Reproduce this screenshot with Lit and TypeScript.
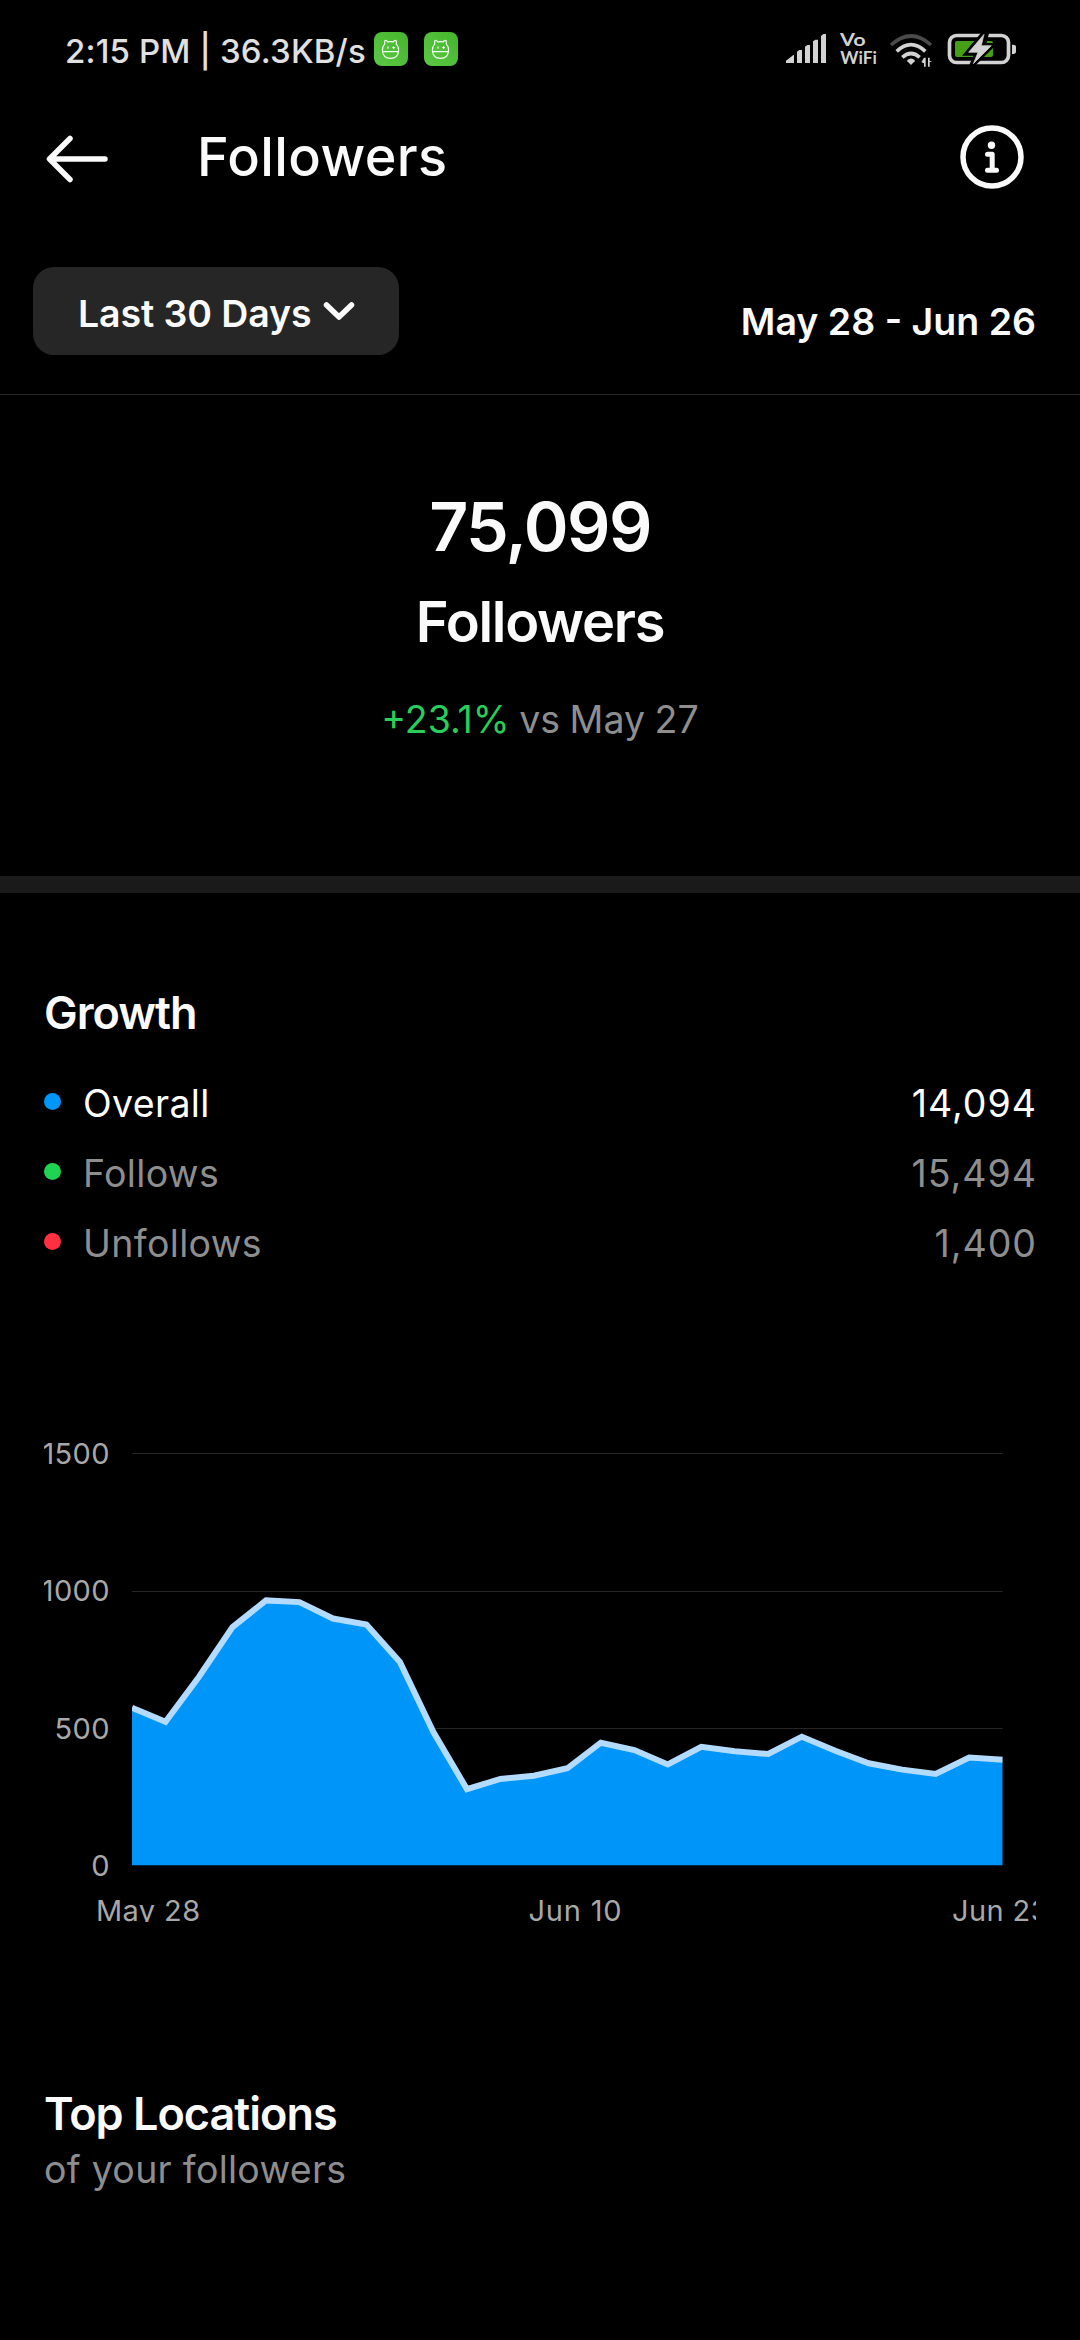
import { LitElement, html, svg, css } from "lit";
import { customElement, property } from "lit/decorators.js";

const DAILY = [
  574, 523, 687, 868, 965, 959, 899, 877, 741, 486, 278, 315, 327, 354, 447,
  420, 368, 432, 416, 406, 469, 418, 372, 349, 333, 393, 385,
];

const STATS = [
  { name: "Overall", value: "14,094", tone: "blue", active: true },
  { name: "Follows", value: "15,494", tone: "green", active: false },
  { name: "Unfollows", value: "1,400", tone: "red", active: false },
];

const appBadge = html`<svg class="badge" width="34" height="34" viewBox="0 0 34 34">
  <defs>
    <linearGradient id="g" x1="0" y1="1" x2="1" y2="0">
      <stop offset="0" stop-color="#5cc846" />
      <stop offset="1" stop-color="#45b52c" />
    </linearGradient>
  </defs>
  <rect width="34" height="34" rx="8" fill="url(#g)" />
  <g fill="none" stroke="#f2fbef" stroke-width="1.2" stroke-linejoin="round" stroke-linecap="round">
    <path d="M10.6 12.2 L10.8 8.8 Q12.4 7.6 13.6 9.9 Q16.5 9.2 19.4 9.9 Q20.6 7.6 22.2 8.8 L22.4 12.2 Q24.6 14.6 24.6 18.2 Q24.2 26.3 16.5 26.3 Q8.8 26.3 8.4 18.2 Q8.4 14.6 10.6 12.2 Z" />
    <path d="M8.6 19.6 H24.4 M14 14.8 V16.2 M19.6 14.6 V16.6 M18.7 15.6 H20.5" />
  </g>
</svg>`;

@customElement("status-bar")
class StatusBar extends LitElement {
  static styles = css`
    :host {
      display: flex;
      align-items: flex-start;
      height: 100px;
      padding: 0 55px 0 65px;
      box-sizing: border-box;
    }
    .clock {
      flex: none;
      width: 309px;
      font-size: 33px;
      font-weight: 500;
      letter-spacing: 0.15px;
      line-height: 102px;
      white-space: nowrap;
      color: #e0e0e0;
    }
    .badge {
      display: block;
      flex: none;
      margin: 32px 16px 0 0;
    }
    .system {
      display: block;
      flex: none;
      margin: 25px 0 0 auto;
    }
    .vowifi {
      font-family: Lato, "Liberation Sans", sans-serif;
      font-weight: 700;
    }
  `;
  render() {
    return html`
      <div class="clock">2:15 PM | 36.3KB/s</div>
      ${appBadge}${appBadge}
      <svg class="system" width="245" height="50" viewBox="0 0 735 150">
        <g fill="#d2d2d2">
          <path d="M18 107 L40 90 H42 V114 H18 Z" />
          <path d="M51 80 L58 75 H66 V114 H51 Z" />
          <path d="M75 65 L82 60 H90 V114 H75 Z" />
          <path d="M99 49 L106 44 H114 V114 H99 Z" />
          <path d="M123 33 L130 27 H138 V114 H123 Z" />
          <text class="vowifi" x="180" y="63" font-size="50" textLength="77" lengthAdjust="spacingAndGlyphs">Vo</text>
          <text class="vowifi" x="181" y="116" font-size="50" textLength="110" lengthAdjust="spacingAndGlyphs">WiFi</text>
        </g>
        <g fill="none" stroke-width="11">
          <path d="M333 60 Q393 6 453 60" stroke="#4a4a4a" />
          <g stroke="#d2d2d2">
            <path d="M350 79 Q393 39 436 79" />
            <path d="M367 97 Q393 74 419 97" />
          </g>
        </g>
        <path d="M382 105 Q393 96 404 105 V109 L393 120 L382 109 Z" fill="#d2d2d2" />
        <g fill="#d2d2d2">
          <path d="M432 98 H437 V125 H432 V115 L424 112 Z" />
          <path d="M444 98 H449 V107 L457 111 H449 V125 H444 Z" />
        </g>
        <rect x="508.500" y="31.500" width="177" height="81" rx="21" fill="none" stroke="#d2d2d2" stroke-width="11" />
        <path d="M696 59 Q708 58 708 66 V80 Q708 87 696 87 Z" fill="#d2d2d2" />
        <rect x="525" y="48" width="114" height="48" rx="6" fill="#46a016" />
        <path d="M606 20 L546 92 L580 92 L566 124 L584 124 L654 54 L620 54 L628 20 Z" fill="#000" />
        <path d="M612 28 L566 82 L594 82 L580 116 L634 62 L604 62 Z" fill="#d2d2d2" stroke="#d2d2d2" stroke-width="2" stroke-linejoin="round" />
      </svg>
    `;
  }
}

@customElement("growth-chart")
class GrowthChart extends LitElement {
  @property({ attribute: false }) data: number[] = [];

  static styles = css`
    :host {
      display: block;
    }
    .plot {
      display: block;
      overflow: hidden;
    }
    .tick {
      fill: #a8a8a8;
      font-family: Inter, Roboto, sans-serif;
      font-size: 29px;
      letter-spacing: 0.4px;
    }
  `;
  render() {
    const left = 88;
    const right = 958.7;
    const base = 435.5;
    const unit = 0.2747;
    const step = (right - left) / (this.data.length - 1);
    const pts = this.data.map((v, i) => `${(left + i * step).toFixed(1)},${(base - v * unit).toFixed(1)}`);
    return html`
      <svg class="plot" width="992" height="492" viewBox="0 0 992 492">
        <defs>
          <clipPath id="area"><rect x=${left} y="0" width=${right - left} height=${base} /></clipPath>
        </defs>
        ${[1500, 1000, 500, 0].map((v) => {
          const y = base - v * unit;
          return svg`
            ${v ? svg`<rect x=${left} y=${Math.round(y)} width=${right - left} height="1" fill="#262626" />` : null}
            <text class="tick" x="66" y=${y + 10.5} text-anchor="end">${v}</text>`;
        })}
        <g clip-path="url(#area)">
          <polygon points="${left},${base} ${pts.join(" ")} ${right},${base}" fill="#0095f8" />
          <polyline points=${pts.join(" ")} fill="none" stroke="#b2dbff" stroke-width="6" />
        </g>
        <text class="tick" x="52" y="491">May 28</text>
        <text class="tick" x="484.500" y="491" textLength="93.500">Jun 10</text>
        <text class="tick" x="908" y="491">Jun 23</text>
      </svg>
    `;
  }
}

@customElement("app-root")
class AppRoot extends LitElement {
  static styles = css`
    :host {
      display: flex;
      flex-direction: column;
      width: 1080px;
      height: 2340px;
      overflow: hidden;
      background: #000;
      color: #fafafa;
      font-family: Inter, Roboto, "Liberation Sans", sans-serif;
      font-size: 37.5px;
    }
    .header {
      display: flex;
      align-items: center;
      height: 114px;
      padding: 0 54px 0 44px;
    }
    .title {
      flex: 1;
      margin-left: 87px;
      font-size: 54px;
      font-weight: 500;
      letter-spacing: 0.4px;
      line-height: 114px;
    }
    .filters {
      display: flex;
      align-items: flex-start;
      justify-content: space-between;
      height: 181px;
      padding: 53px 44px 0 33px;
      box-sizing: border-box;
      border-bottom: 1px solid #262626;
    }
    .range {
      display: flex;
      align-items: center;
      width: 366px;
      height: 88px;
      padding: 3px 44px 0 45px;
      box-sizing: border-box;
      border-radius: 21px;
      background: #262626;
      font-weight: 600;
      white-space: nowrap;
    }
    .range-label {
      flex: 1;
      padding-top: 2px;
      letter-spacing: -0.1px;
    }
    .dates {
      line-height: 109px;
      font-weight: 600;
    }
    .summary {
      height: 481px;
      padding-top: 89px;
      box-sizing: border-box;
      text-align: center;
    }
    .count {
      font-size: 68px;
      line-height: 84px;
      font-weight: 600;
      letter-spacing: -1.6px;
    }
    .label {
      margin-top: 24px;
      font-size: 56px;
      line-height: 60px;
      font-weight: 600;
      letter-spacing: -1.3px;
    }
    .delta {
      margin-top: 43px;
      line-height: 50px;
      word-spacing: -1px;
      color: #8e8e8e;
    }
    .up {
      color: #28cd5a;
    }
    .band {
      height: 17px;
      background: #1a1a1a;
    }
    .growth {
      padding: 92px 44px 0;
    }
    .heading {
      font-size: 45px;
      line-height: 56px;
      font-weight: 600;
      letter-spacing: -1px;
    }
    .stats {
      margin-top: 27px;
    }
    .stat {
      display: flex;
      align-items: center;
      height: 70px;
      letter-spacing: 0.35px;
      color: #8e8e8e;
    }
    .stat.active {
      color: #fff;
    }
    .dot {
      width: 17px;
      height: 17px;
      margin: 0 22px 3px 0;
      border-radius: 50%;
    }
    .dot.blue {
      background: #0095f8;
    }
    .dot.green {
      background: #1fd450;
    }
    .dot.red {
      background: #ff3040;
    }
    .value {
      margin: 0 -1px 0 auto;
      letter-spacing: 1px;
    }
    .chart {
      margin-top: 152px;
    }
    .locations {
      padding: 164px 44px 0;
    }
    .sub {
      margin-top: 3px;
      line-height: 50px;
      letter-spacing: 0.28px;
      color: #8e8e8e;
    }
  `;
  render() {
    return html`
      <status-bar></status-bar>
      <div class="header">
        <svg width="66" height="54" viewBox="0 0 66 54" fill="none" stroke="#fafafa" stroke-width="5.500" stroke-linecap="round" stroke-linejoin="round">
          <path d="M61 29 H6 M26 8.500 L5.500 29 L26 49.500" />
        </svg>
        <div class="title">Followers</div>
        <svg width="68" height="68" viewBox="0 0 68 68">
          <circle cx="34" cy="34" r="29" fill="none" stroke="#fafafa" stroke-width="5.500" />
          <circle cx="33.500" cy="22.300" r="3.700" fill="#fafafa" />
          <path d="M29.500 31.300 H34.200 V47.300 M29.500 47.300 H38.500" fill="none" stroke="#fafafa" stroke-width="5" stroke-linecap="round" stroke-linejoin="round" />
        </svg>
      </div>
      <div class="filters">
        <div class="range">
          <span class="range-label">Last 30 Days</span>
          <svg width="33" height="26" viewBox="0 0 33 26" fill="none" stroke="#fafafa" stroke-width="5.500" stroke-linecap="round" stroke-linejoin="round">
            <path d="M4.500 5 L17 17 L29.500 5" />
          </svg>
        </div>
        <div class="dates">May 28 - Jun 26</div>
      </div>
      <div class="summary">
        <div class="count">75,099</div>
        <div class="label">Followers</div>
        <div class="delta"><span class="up">+23.1%</span> vs May 27</div>
      </div>
      <div class="band"></div>
      <div class="growth">
        <div class="heading">Growth</div>
        <div class="stats">
          ${STATS.map(
            (s) => html`<div class="stat ${s.active ? "active" : ""}">
              <span class="dot ${s.tone}"></span>
              <span>${s.name}</span>
              <span class="value">${s.value}</span>
            </div>`,
          )}
        </div>
        <growth-chart class="chart" .data=${DAILY}></growth-chart>
      </div>
      <div class="locations">
        <div class="heading">Top Locations</div>
        <div class="sub">of your followers</div>
      </div>
    `;
  }
}
